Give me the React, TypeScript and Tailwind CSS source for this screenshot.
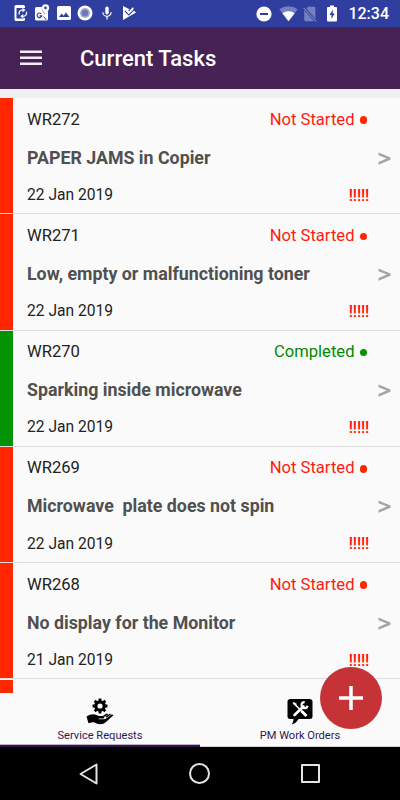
type Status = 'Not Started' | 'Completed';

interface Task {
  id: string;
  title: string;
  date: string;
  status: Status;
}

const tasks: Task[] = [
  { id: 'WR272', title: 'PAPER JAMS in Copier', date: '22 Jan 2019', status: 'Not Started' },
  { id: 'WR271', title: 'Low, empty or malfunctioning toner', date: '22 Jan 2019', status: 'Not Started' },
  { id: 'WR270', title: 'Sparking inside microwave', date: '22 Jan 2019', status: 'Completed' },
  { id: 'WR269', title: 'Microwave  plate does not spin', date: '22 Jan 2019', status: 'Not Started' },
  { id: 'WR268', title: 'No display for the Monitor', date: '21 Jan 2019', status: 'Not Started' },
];

function StatusBar() {
  return (
    <div className="flex h-[27px] shrink-0 items-center justify-between bg-[#303f9f] pr-[11px] pl-[14px] text-white">
      <div className="flex items-center pb-px">
        <svg className="h-[18px] w-[14px]" viewBox="0 0 14 18">
          <path fill="#fff" d="M2 1h7.500q1.500 0 1.500 1.500V4H2.500v10.500h7V14H11v1.500q0 1.500-1.500 1.500H2Q.5 17 .5 15.500v-13Q.5 1 2 1z" />
          <path fill="none" stroke="#fff" strokeWidth="1.300" d="M5.300 10.500A3.400 3.400 0 0 1 9 5.900M12.400 7.800A3.400 3.400 0 0 1 8.700 12.300" />
          <path fill="#fff" d="M8.500 3.800l3 2.300-3 2.300zM9.200 9.900l-3 2.300 3 2.300z" />
        </svg>
        <svg className="ml-[6px] h-[18px] w-[16px]" viewBox="0 0 16 18">
          <path fill="#fff" d="M2.500 3H8q-1 3 3 7.500l3-3.500v8q0 1.500-1.500 1.500h-10Q1 16.500 1 15V4.500Q1 3 2.500 3z" />
          <path fill="none" stroke="#303f9f" strokeWidth="1.200" d="M7.300 9.900a2.300 2.300 0 1 0 .4 2H5.500" />
          <path fill="none" stroke="#303f9f" strokeWidth="1" d="M9.500 12.500l3 3.500" />
          <path fill="#fff" fillRule="evenodd" d="M11.500.3a3.700 3.700 0 0 1 3.700 3.700c0 2.400-3.700 6.500-3.700 6.500S7.800 6.400 7.800 4A3.700 3.700 0 0 1 11.500.3zm0 2.300a1.300 1.300 0 1 0 0 2.700 1.300 1.300 0 0 0 0-2.700z" />
        </svg>
        <svg className="ml-[6px] h-[16px] w-[16px]" viewBox="0 0 16 16">
          <rect x="1" y="1" width="14" height="14" rx="1.500" fill="#fff" />
          <path fill="#303f9f" d="M3 12l2.700-3.500 1.800 2.200L10 7.500l3.300 4.500z" />
        </svg>
        <svg className="ml-[5px] h-[16px] w-[16px]" viewBox="0 0 16 16">
          <circle cx="8" cy="8" r="7.500" fill="#fff" />
          <circle cx="8" cy="8" r="5" fill="#a3abd6" />
          <circle cx="8" cy="8" r="3.300" fill="#6e79bb" />
        </svg>
        <svg className="ml-[9px] h-[14px] w-[10px]" viewBox="0 0 10 14">
          <rect x="3.300" y="0.500" width="3.400" height="8" rx="1.700" fill="#fff" />
          <path fill="none" stroke="#fff" strokeWidth="1.200" d="M.9 6.300a4.100 4.100 0 0 0 8.200 0M5 10.300v3.200" />
        </svg>
        <svg className="ml-[9px] h-[16px] w-[16px]" viewBox="0 0 16 16">
          <path fill="#fff" d="M2 1l6.500 3.300L7 6l1 1.200 3.200-3.200L15 7.500 2 15z" />
          <path fill="none" stroke="#303f9f" strokeWidth="1.200" d="M4 6l3.900 3.900L13.500 4.300" />
          <path fill="none" stroke="#fff" strokeWidth="1.700" d="M5.300 5l2.500 2.700L12.300 2.800" />
        </svg>
      </div>
      <div className="flex items-center">
        <svg className="h-[16px] w-[16px]" viewBox="0 0 16 16">
          <circle cx="8" cy="8" r="7.600" fill="#fff" />
          <rect x="4" y="7" width="8" height="2" fill="#303f9f" />
        </svg>
        <svg className="ml-[7px] h-[16px] w-[19px]" viewBox="0 0 19 16">
          <path fill="#7580bf" d="M.3 3.200Q4.500.3 9.500.3t9.200 2.900L9.500 15.300z" />
          <path fill="#fff" d="M3.300 7.200Q6 5.200 9.500 5.200t6.200 2L9.500 15.300z" />
        </svg>
        <svg className="ml-[5px] h-[16px] w-[14px]" viewBox="0 0 14 16">
          <path fill="#7580bf" d="M5 .8h6q1.400 0 1.400 1.400V12.700L3.500 2.600zM1.200 4.200L11 15.200H2.600Q1.200 15.200 1.200 13.800z" />
          <path fill="none" stroke="#7580bf" strokeWidth="1.200" d="M.6 2l12.500 13.300" />
        </svg>
        <svg className="ml-[9px] h-[17px] w-[12px]" viewBox="0 0 12 17">
          <path fill="#fff" d="M4 .5h4V2h2q1 0 1 1v12.500q0 1-1 1H2q-1 0-1-1V3q0-1 1-1h2z" />
          <path fill="#303f9f" d="M6.800 4.500L3.500 10h2v4l3.200-5.500h-2z" />
        </svg>
        <span className="ml-[10px] pt-px text-[16px] leading-[20px] font-medium">12:34</span>
      </div>
    </div>
  );
}

function TaskRow({ task }: { task: Task }) {
  const done = task.status === 'Completed';
  return (
    <li className="flex h-[116.25px] shrink-0 flex-col">
      <div className="flex min-h-0 flex-1">
        <div className={done ? 'w-[13px] bg-[#039303]' : 'w-[13px] bg-[#ff2600]'} />
        <div className="flex flex-1 flex-col pt-[10px] pl-[14px]">
          <div className="flex h-6 items-center justify-between pr-[33px] text-[16.600px]">
            <span className="text-[#222]">{task.id}</span>
            <span className={done ? 'flex items-center gap-[5px] text-[#008a00]' : 'flex items-center gap-[5px] text-[#ff1a10]'}>
              {task.status}
              <span className={done ? 'size-[7.500px] rounded-full bg-[#039303]' : 'size-[7.500px] rounded-full bg-[#ff2600]'} />
            </span>
          </div>
          <div className="mt-[14px] flex h-6 items-center justify-between pr-[9px]">
            <span className="text-[17.800px] font-bold whitespace-pre text-[#505050]">{task.title}</span>
            <svg className="h-[13px] w-[13px]" viewBox="0 0 13 13">
              <path fill="#a6a6a6" d="M.5.500L12.500 5.400V7.800L.5 12.700V9.900L8.700 6.600.5 3.300z" />
            </svg>
          </div>
          <div className="mt-[13.500px] flex h-6 items-center justify-between pr-[31px]">
            <span className="text-[15.600px] text-[#222]">{task.date}</span>
            <span className="text-[16px] font-medium tracking-[-0.200px] text-[#ff1010]">!!!!!</span>
          </div>
        </div>
      </div>
      <div className="h-px bg-[#dedede]" />
    </li>
  );
}

function HandGearIcon() {
  return (
    <svg className="h-[28px] w-[28px]" viewBox="0 0 28 28">
      <circle cx="14" cy="8" r="4.200" fill="none" stroke="#000" strokeWidth="3.200" />
      <g stroke="#000" strokeWidth="2.800">
        <path d="M14 .5v3M14 12.500v3M6.500 8h3M18.500 8h3M8.700 2.700l2 2M17.300 11.300l2 2M19.300 2.700l-2 2M10.700 11.300l-2 2" />
      </g>
      <path d="M.5 18.500Q5 15.500 9 16.500l4 1.500h4q1.700.3 1.200 1.700-.4.900-2 .9h-3.500v.7h5q1.500 0 3-1.300l4.500-3.300q1.500-.7 2.200.5L20 24q-2.300 2.300-5.500 2.300-3.500 0-6.300-2l-3 .2-2.700.8z" />
      <path fill="none" stroke="#000" strokeWidth="1.500" d="M17.500 18.300l4-2.300M20 19l4.500-3" />
    </svg>
  );
}

function WorkOrderIcon() {
  return (
    <svg className="h-[28px] w-[28px]" viewBox="0 0 28 28">
      <path d="M4.500 1h19Q26.500 1 26.500 3.500v15q0 2.500-3 2.500H12.500Q10 25.500 5.500 26.500 7.800 24 7.500 21h-3q-3 0-3-2.500v-15Q1.500 1 4.500 1z" />
      <path fill="none" stroke="#fff" strokeWidth="2.600" strokeLinecap="round" d="M8.500 17L17.500 8.500" />
      <path fill="none" stroke="#fff" strokeWidth="2.200" d="M18.700 4.200a3 3 0 1 0 2.800 3.500" />
      <path fill="none" stroke="#fff" strokeWidth="1.600" d="M8 5.500l8 8" />
      <path fill="none" stroke="#fff" strokeWidth="3" d="M15.500 13l5 5" />
      <path fill="#fff" d="M6.500 5.300L8 4l3 2-1.700 1.800z" />
    </svg>
  );
}

function TabBar() {
  return (
    <div className="grid h-[54px] shrink-0 grid-cols-2 bg-[#fafafa] text-[11.100px] leading-[14px] text-[#2f1650]">
      <div className="flex flex-col items-center">
        <div className="mt-[5px]">
          <HandGearIcon />
        </div>
        <span className="mt-[3px]">Service Requests</span>
        <div className="mt-auto h-[3px] w-full border-t border-[#b9b3bf] bg-[#32134f]" />
      </div>
      <div className="flex flex-col items-center">
        <div className="mt-[5px]">
          <WorkOrderIcon />
        </div>
        <span className="mt-[3px]">PM Work Orders</span>
        <div className="mt-auto h-px w-full bg-[#d4d4d4]" />
      </div>
    </div>
  );
}

export default function App() {
  return (
    <div className="relative flex h-[800px] w-[400px] flex-col overflow-hidden bg-[#fafafa] font-['Roboto',sans-serif]">
      <StatusBar />
      <header className="flex h-[62px] shrink-0 items-center bg-[#462255] pl-[20px]">
        <svg className="h-[16px] w-[22px]" viewBox="0 0 22 16">
          <path stroke="#f1edf3" strokeWidth="2.400" d="M0 1.700h22M0 7.700h22M0 13.700h22" />
        </svg>
        <h1 className="ml-[38px] pt-px text-[22px] font-medium text-white">Current Tasks</h1>
      </header>
      <div className="h-[9px] shrink-0 bg-[#efefef]" />
      <ul className="flex h-[595px] shrink-0 flex-col overflow-hidden">
        {tasks.map((task) => (
          <TaskRow key={task.id} task={task} />
        ))}
        <li className="mt-[0.500px] h-[13px] w-[13px] shrink-0 bg-[#ff2600]" />
      </ul>
      <TabBar />
      <nav className="flex flex-1 items-center justify-center bg-black pr-px">
        <svg className="h-[22px] w-[20px]" viewBox="0 0 20 22">
          <path fill="none" stroke="#e4e4e4" strokeWidth="2" strokeLinejoin="round" d="M17.500 1.500v19L1.500 11z" />
        </svg>
        <div className="ml-[90px] size-[21px] rounded-full border-2 border-[#e4e4e4]" />
        <div className="mr-px ml-[91px] size-[19px] rounded-[1px] border-2 border-[#e4e4e4]" />
      </nav>
      <button className="absolute top-[667px] left-[320px] flex size-[62px] items-center justify-center rounded-full bg-[#c63336]">
        <svg className="size-[24px]" viewBox="0 0 24 24">
          <path stroke="#fff" strokeWidth="3.500" d="M12 0v24M0 12h24" />
        </svg>
      </button>
    </div>
  );
}
